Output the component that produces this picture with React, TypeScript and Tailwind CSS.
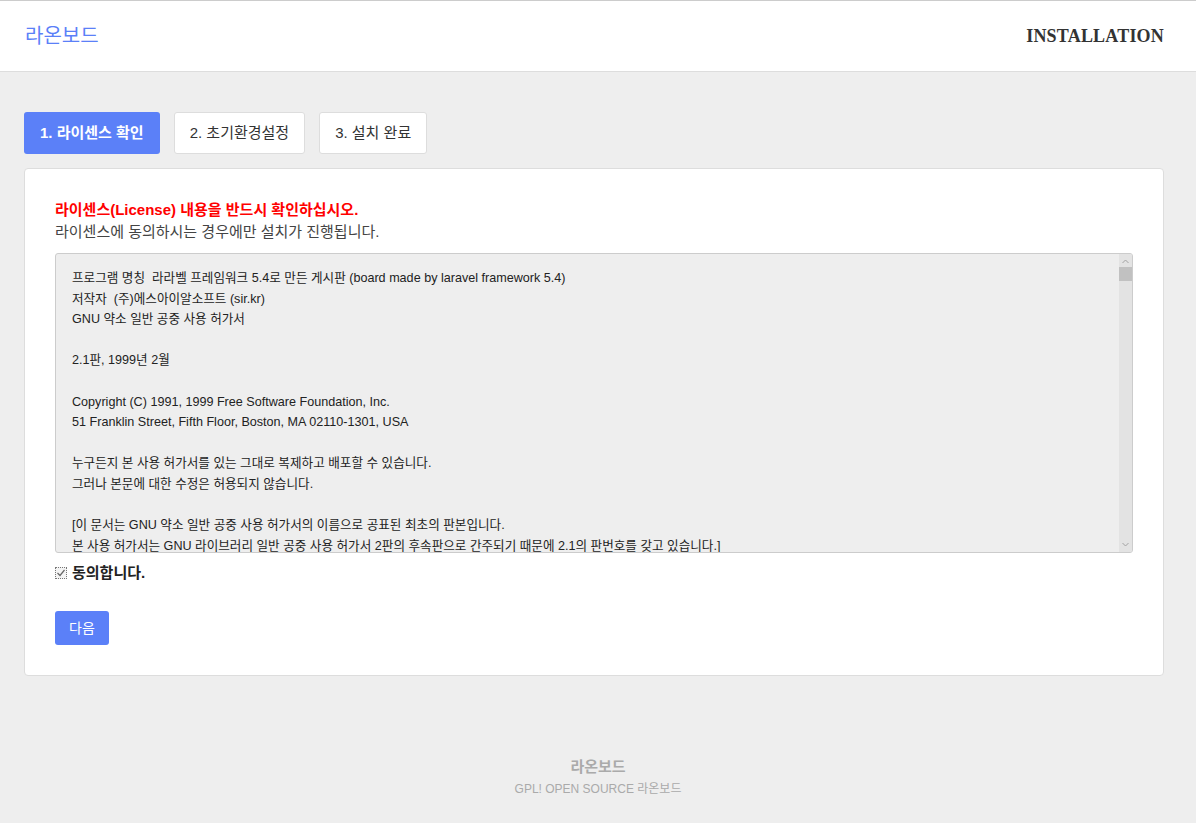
const FONT = "font-['Liberation_Sans','Noto_Sans_CJK_KR',sans-serif]";

const LICENSE = `프로그램 명칭  라라벨 프레임워크 5.4로 만든 게시판 (board made by laravel framework 5.4)
저작자  (주)에스아이알소프트 (sir.kr)
GNU 약소 일반 공중 사용 허가서

2.1판, 1999년 2월

Copyright (C) 1991, 1999 Free Software Foundation, Inc.
51 Franklin Street, Fifth Floor, Boston, MA 02110-1301, USA

누구든지 본 사용 허가서를 있는 그대로 복제하고 배포할 수 있습니다.
그러나 본문에 대한 수정은 허용되지 않습니다.

[이 문서는 GNU 약소 일반 공중 사용 허가서의 이름으로 공표된 최초의 판본입니다.
본 사용 허가서는 GNU 라이브러리 일반 공중 사용 허가서 2판의 후속판으로 간주되기 때문에 2.1의 판번호를 갖고 있습니다.]

전 문

대부분의 소프트웨어 사용 허가서들은 소프트웨어를 공유하거나 수정할 수 있는 자유를 제한하려는 목적으로 만들어졌습니다.
그러나 GNU 일반 공중 사용 허가서는 자유 소프트웨어를 공유하고 수정할 수 있는 자유를 보장하기 위한 것입니다.`;

const steps = [
  { label: "1. 라이센스 확인", active: true },
  { label: "2. 초기환경설정", active: false },
  { label: "3. 설치 완료", active: false },
];

function ScrollTrack() {
  return (
    <div className="w-[13px] shrink-0 bg-[#e3e3e3] flex flex-col items-center">
      <svg width="9" height="9" viewBox="0 0 9 9" className="mt-[3px]">
        <path d="M1.5 6 L4.5 3 L7.5 6" stroke="#a3a3a3" strokeWidth="1" fill="none" />
      </svg>
      <div className="w-full h-[14px] bg-[#c1c1c1] mt-[1px]" />
      <div className="flex-1" />
      <svg width="9" height="9" viewBox="0 0 9 9" className="mb-[3px]">
        <path d="M1.5 3 L4.5 6 L7.5 3" stroke="#a3a3a3" strokeWidth="1" fill="none" />
      </svg>
    </div>
  );
}

export default function App() {
  return (
    <div className={`min-h-[823px] bg-[#eeeeee] ${FONT} text-[#333]`}>
      <header className="h-[72px] bg-white border-t border-b border-t-[#cccccc] border-b-[#dddddd] flex items-center justify-between pl-[25px] pr-[32px]">
        <a className="text-[20px] text-[#5b80f8]">라온보드</a>
        <h1 className="font-['Liberation_Serif',serif] font-bold text-[18px] text-[#333] tracking-[0.2px]">
          INSTALLATION
        </h1>
      </header>

      <main className="pl-[24px] pr-[32px] pt-[40px]">
        <nav className="flex gap-[14px]">
          {steps.map((s) =>
            s.active ? (
              <div
                key={s.label}
                className="h-[42px] px-[16px] flex items-center rounded-[3px] bg-[#5b80f8] text-white font-bold text-[15px]"
              >
                {s.label}
              </div>
            ) : (
              <div
                key={s.label}
                className="h-[42px] px-[15px] flex items-center rounded-[3px] bg-white border border-[#dddddd] text-[#333] text-[15px]"
              >
                {s.label}
              </div>
            )
          )}
        </nav>

        <section className="mt-[14px] bg-white border border-[#dddddd] rounded-[4px] px-[30px] pt-[30px] pb-[30px]">
          <p className="text-[15px] font-bold text-[#ff0000] leading-[22px]">
            라이센스(License) 내용을 반드시 확인하십시오.
          </p>
          <p className="text-[15px] text-[#444] leading-[22px]">
            라이센스에 동의하시는 경우에만 설치가 진행됩니다.
          </p>

          <div className="mt-[10px] h-[300px] flex bg-[#eeeeee] border border-[#cccccc] rounded-[3px] overflow-hidden">
            <div className="flex-1 overflow-hidden pl-[16px] pr-[10px] pt-[14px] text-[12.6px] leading-[20.6px] text-[#222] whitespace-pre-wrap">
              {LICENSE}
            </div>
            <ScrollTrack />
          </div>

          <label className="mt-[9px] flex items-center gap-[5px] text-[15px] font-bold text-[#222] leading-[22px]">
            <span className="w-[12px] h-[12px] border border-dotted border-[#777] bg-[#f4f4f4] flex items-center justify-center">
              <svg width="10" height="10" viewBox="0 0 10 10">
                <path d="M1.5 5 L4 7.5 L8.5 2" stroke="#666" strokeWidth="1.2" fill="none" />
              </svg>
            </span>
            동의합니다.
          </label>

          <button className="mt-[27px] h-[34px] px-[14px] rounded-[3px] bg-[#5b80f8] text-white text-[14px]">
            다음
          </button>
        </section>
      </main>

      <footer className="pt-[80px] pb-[28px] flex flex-col items-center">
        <p className="text-[15px] font-bold text-[#aaaaaa] leading-[22px]">라온보드</p>
        <p className="text-[12px] text-[#aaaaaa] leading-[22px]">GPL! OPEN SOURCE 라온보드</p>
      </footer>
    </div>
  );
}
